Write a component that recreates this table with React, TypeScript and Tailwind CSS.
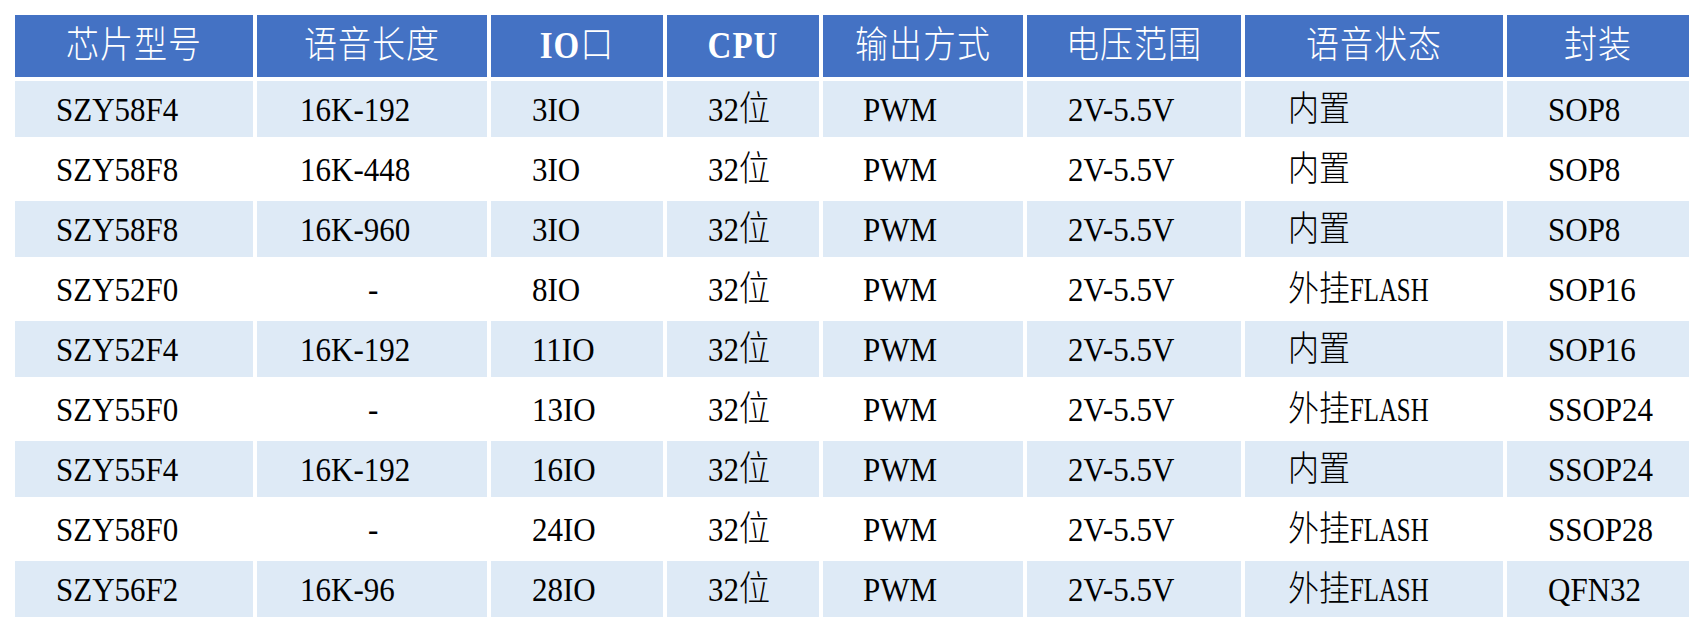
import React from "react";

const cols = ["w-[238px]", "w-[230px]", "w-[172px]", "w-[152px]", "w-[200px]", "w-[214px]", "w-[258px]", "w-[182px]"];
const pads = ["pl-[41px]", "pl-[43px]", "pl-[41px]", "pl-[41px]", "pl-[40px]", "pl-[41px]", "pl-[43px]", "pl-[41px]"];

type Row = string[];
const rows: Row[] = [
  ["SZY58F4", "16K-192", "3IO", "32位", "PWM", "2V-5.5V", "内置", "SOP8"],
  ["SZY58F8", "16K-448", "3IO", "32位", "PWM", "2V-5.5V", "内置", "SOP8"],
  ["SZY58F8", "16K-960", "3IO", "32位", "PWM", "2V-5.5V", "内置", "SOP8"],
  ["SZY52F0", "-", "8IO", "32位", "PWM", "2V-5.5V", "外挂FLASH", "SOP16"],
  ["SZY52F4", "16K-192", "11IO", "32位", "PWM", "2V-5.5V", "内置", "SOP16"],
  ["SZY55F0", "-", "13IO", "32位", "PWM", "2V-5.5V", "外挂FLASH", "SSOP24"],
  ["SZY55F4", "16K-192", "16IO", "32位", "PWM", "2V-5.5V", "内置", "SSOP24"],
  ["SZY58F0", "-", "24IO", "32位", "PWM", "2V-5.5V", "外挂FLASH", "SSOP28"],
  ["SZY56F2", "16K-96", "28IO", "32位", "PWM", "2V-5.5V", "外挂FLASH", "QFN32"],
];

const font = "font-['Liberation_Serif','Noto_Sans_CJK_SC',serif]";

function Header() {
  const heads: React.ReactNode[] = [
    "芯片型号",
    "语音长度",
    <><span className="font-bold">IO</span>口</>,
    <span className="font-bold">CPU</span>,
    "输出方式",
    "电压范围",
    "语音状态",
    "封装",
  ];
  return (
    <div className="flex gap-[4px]">
      {heads.map((h, i) => (
        <div key={i} className={`${cols[i]} h-[62px] bg-[#4472c4] flex items-center justify-center text-white text-[33px] font-light`}>
          <span className="inline-block scale-y-[1.12] tracking-[1px] leading-none">{h}</span>
        </div>
      ))}
    </div>
  );
}

function Cell({ text, i }: { text: string; i: number }) {
  let content: React.ReactNode = text;
  if (text.startsWith("外挂FLASH")) {
    content = (
      <>
        外挂<span className="inline-block scale-x-[0.8] origin-left">FLASH</span>
      </>
    );
  }
  const pad = text === "-" ? "pl-[111px]" : pads[i];
  return (
    <div className={`${cols[i]} h-[56px] flex items-center ${pad}`}>
      <span className="inline-block scale-y-[1.12] leading-none">{content}</span>
    </div>
  );
}

export default function App() {
  return (
    <div className={`w-[1704px] h-[632px] bg-white p-[15px] ${font} text-black`}>
      <div className="flex flex-col gap-[4px]">
        <Header />
        {rows.map((r, ri) => (
          <div key={ri} className={`flex gap-[4px] text-[31px] font-light ${ri % 2 === 0 ? "[&>div]:bg-[#deeaf6]" : ""}`}>
            {r.map((t, i) => (
              <Cell key={i} text={t} i={i} />
            ))}
          </div>
        ))}
      </div>
    </div>
  );
}
